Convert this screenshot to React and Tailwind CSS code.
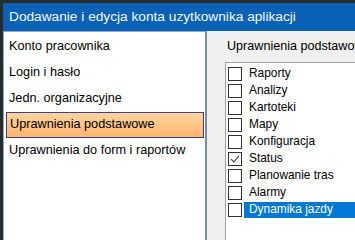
import React from 'react';

const sections = [
  'Konto pracownika',
  'Login i hasło',
  'Jedn. organizacyjne',
  'Uprawnienia podstawowe',
  'Uprawnienia do form i raportów',
];

const perms = [
  { label: 'Raporty', checked: false },
  { label: 'Analizy', checked: false },
  { label: 'Kartoteki', checked: false },
  { label: 'Mapy', checked: false },
  { label: 'Konfiguracja', checked: false },
  { label: 'Status', checked: true },
  { label: 'Planowanie tras', checked: false },
  { label: 'Alarmy', checked: false },
  { label: 'Dynamika jazdy', checked: false, focused: true },
];

const CheckBox = ({ checked }) => (
  <div className="w-[14px] h-[14px] border border-[#333333] bg-white flex items-center justify-center shrink-0">
    {checked && (
      <svg width="10" height="10" viewBox="0 0 10 10">
        <path d="M1 5.2 L3.8 8 L9 1.8" fill="none" stroke="#3a3a3a" strokeWidth="1.1" />
      </svg>
    )}
  </div>
);

export default function App() {
  const selected = 3;

  return (
    <div
      className="w-[355px] h-[240px] bg-[#2b2b2b] pt-[3px] pl-[3px] overflow-hidden flex flex-col"
      style={{ fontFamily: '"Liberation Sans", Arial, sans-serif' }}
    >
      {/* Title bar */}
      <div className="h-[28px] bg-[#0a62b6] text-[#f4f8fc] text-[13.7px] flex items-center pl-[6px] whitespace-nowrap">
        Dodawanie i edycja konta uzytkownika aplikacji
      </div>

      <div className="flex flex-1 min-h-0">
        {/* Section list */}
        <div className="w-[204px] bg-white border-l border-t border-[#8fa8cc] border-r-2 border-r-[#6c8ebf] pt-[2px] pl-[2px] pr-[1px] text-[12.7px] text-black">
          {sections.map((s, i) => (
            <div
              key={i}
              className={`h-[26px] flex items-center pl-[3px] whitespace-nowrap ${
                i === selected
                  ? 'bg-gradient-to-b from-[#ffd4a0] to-[#ffb56c] border border-[#4a3f7e] pl-[2px]'
                  : ''
              }`}
            >
              {s}
            </div>
          ))}
        </div>

        {/* Permissions */}
        <div className="flex-1 bg-[#f0f0f0] pl-[18px] flex flex-col min-w-0 overflow-hidden">
          <div className="h-[31px] flex items-center pl-[2px] text-[12.6px] text-black whitespace-nowrap">
            Uprawnienia podstawowe
          </div>
          <div className="flex-1 bg-white border-l border-t border-[#a0a0a0] pt-[2px] pl-[2px] text-[11.9px]">
            {perms.map((p, i) => (
              <div key={i} className="h-[17px] flex items-center">
                <CheckBox checked={p.checked} />
                <span
                  className={`ml-[2px] flex-1 h-[16px] flex items-center pl-[5px] whitespace-nowrap leading-none ${
                    p.focused ? 'bg-[#0078d7] text-white' : 'text-black'
                  }`}
                >
                  {p.label}
                </span>
              </div>
            ))}
          </div>
        </div>
      </div>
    </div>
  );
}
